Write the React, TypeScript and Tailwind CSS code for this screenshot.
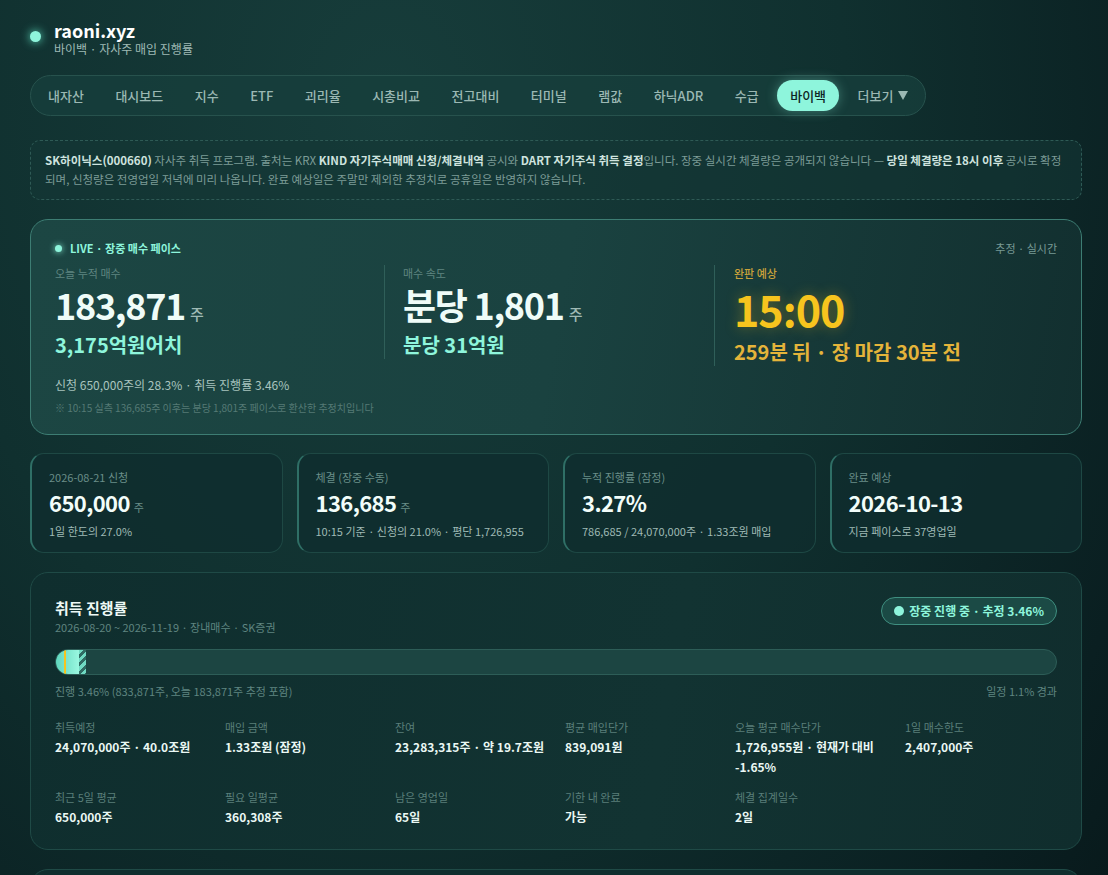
import React from "react";

const navItems = [
  "내자산",
  "대시보드",
  "지수",
  "ETF",
  "괴리율",
  "시총비교",
  "전고대비",
  "터미널",
  "램값",
  "하닉ADR",
  "수급",
  "바이백",
];

const stats = [
  { label: "2026-08-21 신청", value: "650,000", unit: "주", sub: "1일 한도의 27.0%" },
  { label: "체결 (장중 수동)", value: "136,685", unit: "주", sub: "10:15 기준 · 신청의 21.0% · 평단 1,726,955" },
  { label: "누적 진행률 (잠정)", value: "3.27%", unit: "", sub: "786,685 / 24,070,000주 · 1.33조원 매입" },
  { label: "완료 예상", value: "2026-10-13", unit: "", sub: "지금 페이스로 37영업일" },
];

const details = [
  { label: "취득예정", value: "24,070,000주 · 40.0조원" },
  { label: "매입 금액", value: "1.33조원 (잠정)" },
  { label: "잔여", value: "23,283,315주 · 약 19.7조원" },
  { label: "평균 매입단가", value: "839,091원" },
  { label: "오늘 평균 매수단가", value: "1,726,955원 · 현재가 대비 -1.65%" },
  { label: "1일 매수한도", value: "2,407,000주" },
  { label: "최근 5일 평균", value: "650,000주" },
  { label: "필요 일평균", value: "360,308주" },
  { label: "남은 영업일", value: "65일" },
  { label: "기한 내 완료", value: "가능" },
  { label: "체결 집계일수", value: "2일" },
];

export default function App() {
  return (
    <div
      className="min-h-[875px] overflow-hidden bg-[radial-gradient(ellipse_at_35%_10%,#173d3b_0%,#10302f_45%,#0a1f21_80%,#071618_100%)] text-[#e8f7f3]"
      style={{ fontFamily: '"Noto Sans CJK KR", "Noto Sans", sans-serif' }}
    >
      <div className="ml-[30px] w-[1052px] pt-[19px]">
        {/* header */}
        <div className="flex items-start gap-[13px]">
          <span className="mt-[12px] h-[11px] w-[11px] rounded-full bg-[#8ef5dc] shadow-[0_0_10px_#5fe3c4]" />
          <div>
            <div className="text-[18px] font-bold leading-[22px] text-white">raoni.xyz</div>
            <div className="text-[12px] leading-[16px] text-[#9fbab5]">바이백 · 자사주 매입 진행률</div>
          </div>
        </div>

        {/* nav */}
        <nav className="mt-[18px] inline-flex items-center gap-[5.5px] rounded-full border border-[#27524d] bg-[#173f3c]/80 p-[4px]">
          {navItems.map((item) => (
            <span
              key={item}
              className={
                item === "바이백"
                  ? "rounded-full bg-[#8ef5dc] px-[13px] py-[6px] text-[13px] font-medium leading-[19px] text-[#0d2624] shadow-[0_0_12px_rgba(142,245,220,0.35)]"
                  : "px-[13px] py-[6px] text-[13px] font-medium leading-[19px] text-[#9bb8b3]"
              }
            >
              {item}
            </span>
          ))}
          <span className="flex items-center gap-[5px] px-[13px] py-[6px] text-[13px] font-medium leading-[19px] text-[#9bb8b3]">
            더보기
            <svg width="10" height="9" viewBox="0 0 10 9">
              <path d="M0 0h10L5 9z" fill="#9bb8b3" />
            </svg>
          </span>
        </nav>

        {/* note */}
        <div className="mt-[24px] rounded-[10px] border border-dashed border-[#2e5a55] bg-[#143735]/60 px-[14px] py-[10px] text-[11.5px] leading-[19px] text-[#7d9c97]">
          <b className="font-bold text-[#cfe3df]">SK하이닉스(000660)</b> 자사주 취득 프로그램. 출처는 KRX{" "}
          <b className="font-bold text-[#cfe3df]">KIND 자기주식매매 신청/체결내역</b> 공시와{" "}
          <b className="font-bold text-[#cfe3df]">DART 자기주식 취득 결정</b>입니다. 장중 실시간 체결량은 공개되지 않습니다 —{" "}
          <b className="font-bold text-[#cfe3df]">당일 체결량은 18시 이후</b> 공시로 확정되며, 신청량은 전영업일 저녁에 미리 나옵니다. 완료 예상일은 주말만 제외한 추정치로 공휴일은 반영하지 않습니다.
        </div>

        {/* live card */}
        <div className="mt-[19px] rounded-[18px] border border-[#3d7d73] bg-[linear-gradient(100deg,#1c4643_0%,#1a4240_50%,#122f2f_100%)] px-[24px] pb-[18px] pt-[20px]">
          <div className="flex items-center justify-between">
            <div className="flex items-center gap-[8px] text-[11px] font-bold leading-[16px] text-[#8ef5dc]">
              <span className="h-[7px] w-[7px] rounded-full bg-[#8ef5dc] shadow-[0_0_6px_#8ef5dc]" />
              LIVE · 장중 매수 페이스
            </div>
            <div className="text-[11px] text-[#789a95]">추정 · 실시간</div>
          </div>

          <div className="mt-[8px] grid grid-cols-[329px_330px_1fr] items-start">
            <div>
              <div className="text-[11px] leading-[16px] text-[#5f8580]">오늘 누적 매수</div>
              <div className="mt-[1px] flex items-baseline gap-[5px]">
                <span className="text-[36px] font-bold leading-[44px] tracking-[-1.3px] text-[#effcf8]">183,871</span>
                <span className="text-[15px] font-medium text-[#9fbab5]">주</span>
              </div>
              <div className="mt-[5px] text-[20px] font-bold leading-[28px] text-[#8ef5dc]">3,175억원어치</div>
            </div>
            <div className="border-l border-[#2f5f59] pl-[18px]">
              <div className="text-[11px] leading-[16px] text-[#5f8580]">매수 속도</div>
              <div className="mt-[1px] flex items-baseline gap-[5px]">
                <span className="text-[36px] font-bold leading-[44px] tracking-[-1.3px] text-[#effcf8]">분당 1,801</span>
                <span className="text-[15px] font-medium text-[#9fbab5]">주</span>
              </div>
              <div className="mt-[5px] text-[20px] font-bold leading-[28px] text-[#8ef5dc]">분당 31억원</div>
            </div>
            <div className="border-l border-[#2f5f59] pl-[19px]">
              <div className="text-[11px] font-medium leading-[16px] text-[#c9a23a]">완판 예상</div>
              <div className="mt-[1px] text-[43px] font-bold leading-[52px] tracking-[-1px] text-[#f7c41e] [text-shadow:0_0_14px_rgba(247,196,30,0.35)]">
                15:00
              </div>
              <div className="mt-[4px] text-[20px] font-bold leading-[28px] text-[#e4b43a]">259분 뒤 · 장 마감 30분 전</div>
            </div>
          </div>

          <div className="mt-[10px] text-[12px] leading-[18px] text-[#a9c4bf]">신청 650,000주의 28.3% · 취득 진행률 3.46%</div>
          <div className="mt-[6px] text-[10px] leading-[16px] text-[#557a75]">※ 10:15 실측 136,685주 이후는 분당 1,801주 페이스로 환산한 추정치입니다</div>
        </div>

        {/* stats */}
        <div className="mt-[18px] grid grid-cols-4 gap-[14px]">
          {stats.map((s) => (
            <div
              key={s.label}
              className="h-[100px] rounded-[14px] border border-l-2 border-[#1e4844] border-l-[#2f6f66] bg-[#0f2d2e]/80 px-[17px] pt-[15px]"
            >
              <div className="text-[11px] leading-[16px] text-[#6a8e89]">{s.label}</div>
              <div className="mt-[3px] flex items-baseline gap-[4px]">
                <span className="text-[22px] font-bold leading-[28px] tracking-[-0.6px] text-[#f2fdfa]">{s.value}</span>
                {s.unit && <span className="text-[11px] text-[#6a8e89]">{s.unit}</span>}
              </div>
              <div className="mt-[7px] text-[11px] leading-[16px] text-[#9fbab5]">{s.sub}</div>
            </div>
          ))}
        </div>

        {/* progress card */}
        <div className="mt-[19px] rounded-[18px] border border-[#1f4a46] bg-[linear-gradient(100deg,#0f2e2e_0%,#123332_60%,#102d2d_100%)] px-[24px] pb-[22px] pt-[24px]">
          <div className="flex items-start justify-between">
            <div>
              <div className="text-[15px] font-bold leading-[22px] text-[#eef9f6]">취득 진행률</div>
              <div className="text-[11px] leading-[16px] text-[#5f8580]">2026-08-20 ~ 2026-11-19 · 장내매수 · SK증권</div>
            </div>
            <div className="flex items-center gap-[5px] rounded-full border border-[#3f8f80] bg-[#1b4a45] px-[12px] py-[4px] text-[12px] font-bold leading-[18px] text-[#8ef5dc]">
              <span className="h-[10px] w-[10px] rounded-full bg-[#8ef5dc]" />
              장중 진행 중 · 추정 3.46%
            </div>
          </div>

          <div className="relative mt-[14px] flex h-[26px] overflow-hidden rounded-full border border-[#2d5d57] bg-[#1c4542]">
            <div className="h-full w-[23px] bg-[linear-gradient(90deg,#5fd6bd,#9af7e0)]" />
            <div className="h-full w-[7px] bg-[repeating-linear-gradient(135deg,#6fd9c2_0px,#6fd9c2_3px,#2f6b63_3px,#2f6b63_6px)]" />
            <div className="absolute left-[8px] top-0 h-full w-[2px] bg-[#f7c41e]" />
          </div>
          <div className="mt-[8px] flex justify-between text-[11px] leading-[16px] text-[#5f8580]">
            <span>진행 3.46% (833,871주, 오늘 183,871주 추정 포함)</span>
            <span>일정 1.1% 경과</span>
          </div>

          <div className="mt-[20px] grid grid-cols-6 gap-x-[18px] gap-y-[12px]">
            {details.map((d) => (
              <div key={d.label}>
                <div className="text-[11px] leading-[16px] text-[#5a7f7a]">{d.label}</div>
                <div className="mt-[2px] text-[12px] font-semibold leading-[20px] text-[#eaf8f4]">{d.value}</div>
              </div>
            ))}
          </div>
        </div>

        {/* next card (cut off) */}
        <div className="mt-[19px] h-[200px] rounded-[18px] border border-[#1f4a46] bg-[#0f2e2e]" />
      </div>
    </div>
  );
}
